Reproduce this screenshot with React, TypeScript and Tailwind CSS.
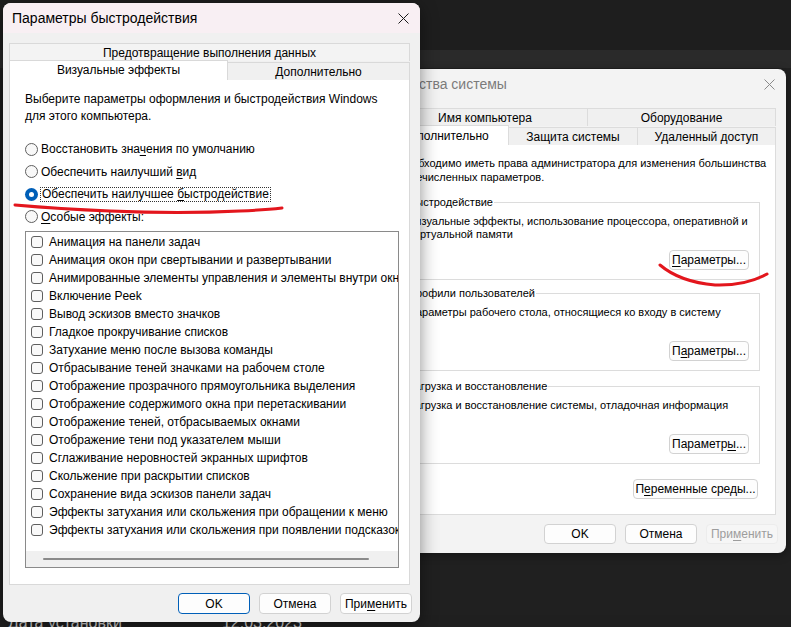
import React from "react";

const items = [
  "Анимация на панели задач",
  "Анимация окон при свертывании и развертывании",
  "Анимированные элементы управления и элементы внутри окна",
  "Включение Peek",
  "Вывод эскизов вместо значков",
  "Гладкое прокручивание списков",
  "Затухание меню после вызова команды",
  "Отбрасывание теней значками на рабочем столе",
  "Отображение прозрачного прямоугольника выделения",
  "Отображение содержимого окна при перетаскивании",
  "Отображение теней, отбрасываемых окнами",
  "Отображение тени под указателем мыши",
  "Сглаживание неровностей экранных шрифтов",
  "Скольжение при раскрытии списков",
  "Сохранение вида эскизов панели задач",
  "Эффекты затухания или скольжения при обращении к меню",
  "Эффекты затухания или скольжения при появлении подсказок",
];

function CloseX({ color }: { color: string }) {
  return (
    <svg width="11" height="11" viewBox="0 0 11 11">
      <path d="M0.5 0.5 L10.5 10.5 M10.5 0.5 L0.5 10.5" stroke={color} strokeWidth="1" fill="none" />
    </svg>
  );
}

function U({ children }: { children: React.ReactNode }) {
  return <span className="underline decoration-1 underline-offset-[2px]">{children}</span>;
}

function Radio({ checked }: { checked?: boolean }) {
  if (checked) {
    return (
      <span className="flex h-[13px] w-[13px] shrink-0 items-center justify-center rounded-full bg-[#005fb8]">
        <span className="h-[5px] w-[5px] rounded-full bg-white" />
      </span>
    );
  }
  return <span className="h-[13px] w-[13px] shrink-0 rounded-full border border-[#5f5f5f] bg-[#f8f8f8]" />;
}

function Btn({
  children,
  primary,
  disabled,
  className = "",
}: {
  children: React.ReactNode;
  primary?: boolean;
  disabled?: boolean;
  className?: string;
}) {
  const base = "flex items-center justify-center rounded-[4px] border text-[12px] ";
  const look = primary
    ? "border-[#005fb8] bg-[#fdfdfd] text-black"
    : disabled
    ? "border-[#ececec] bg-[#f6f6f6] text-[#9d9d9d]"
    : "border-[#d2d2d2] bg-[#fdfdfd] text-black";
  return <div className={base + look + " " + className}>{children}</div>;
}

function Group({
  label,
  lines,
  btn,
}: {
  label: string;
  lines: React.ReactNode;
  btn: React.ReactNode;
}) {
  return (
    <div className="relative flex h-[78px] flex-col border border-[#dcdcdc] pb-[9px] pl-[9px] pr-[10px] pt-[12px]">
      <span className="absolute left-[8px] top-[-8px] bg-white px-[1px] text-[11px] leading-[14px]">{label}</span>
      <div className="whitespace-nowrap text-[11px] leading-[13px]">{lines}</div>
      <Btn className="mt-auto h-[20px] w-[80px] self-end">{btn}</Btn>
    </div>
  );
}

export default function App() {
  return (
    <div className="relative isolate h-[627px] w-[791px] overflow-hidden bg-[#1f1f1f] font-['Liberation_Sans',Arial,sans-serif] text-black">
      {/* desktop background */}
      <div className="flex h-full flex-col">
        <div className="h-[50px] bg-[#1e1e1e]" />
        <div className="h-[18px] bg-[#2a2a2a]" />
        <div className="flex-1 bg-[#202020]" />
        <div className="flex h-[12px] items-start gap-[100px] pl-[8px] text-[16px] leading-[16px] text-[#d6d6d6]">
          <span>Дата установки</span>
          <span>12.03.2023</span>
        </div>
      </div>

      {/* System properties window (behind) */}
      <div className="absolute left-[374px] top-[69px] z-0 isolate flex h-[484px] w-[412px] flex-col overflow-hidden rounded-[8px] bg-[#f3f3f3] shadow-[0_2px_10px_rgba(0,0,0,0.4)]">
        <div className="flex h-[31px] shrink-0 items-center justify-between pl-[12px] pr-[11px]">
          <span className="text-[14px] text-[#7b7b7b]">Свойства системы</span>
          <CloseX color="#8a8a8a" />
        </div>
        <div className="ml-[8px] mr-[10px] mt-[8px] flex flex-col">
          <div className="flex h-[18px] text-[12px]">
            <div className="flex w-[206px] items-center justify-center border border-b-0 border-[#dcdcdc] bg-[#f0f0f0]">
              Имя компьютера
            </div>
            <div className="flex flex-1 items-center justify-center border border-b-0 border-l-0 border-[#dcdcdc] bg-[#f0f0f0]">
              Оборудование
            </div>
          </div>
          <div className="relative z-10 flex h-[19px] text-[12px]">
            <div className="-mt-[1px] flex h-[20px] w-[127px] items-center justify-center border border-b-0 border-[#dcdcdc] bg-white">
              Дополнительно
            </div>
            <div className="mt-[1px] flex h-[18px] w-[129px] items-center justify-center border border-b-0 border-l-0 border-[#dcdcdc] bg-[#f0f0f0]">
              Защита системы
            </div>
            <div className="mt-[1px] flex h-[18px] flex-1 items-center justify-center border border-b-0 border-l-0 border-[#dcdcdc] bg-[#f0f0f0]">
              Удаленный доступ
            </div>
          </div>
          <div className="-mt-[1px] flex h-[371px] flex-col border border-[#dcdcdc] bg-white pl-[15px] pr-[15px] pt-[11px]">
            <div className="whitespace-nowrap text-[11px] leading-[14px]">
              Необходимо иметь права администратора для изменения большинства
              <br />
              перечисленных параметров.
            </div>
            <div className="mt-[18px]">
              <Group
                label="Быстродействие"
                lines={
                  <>
                    Визуальные эффекты, использование процессора, оперативной и
                    <br />
                    виртуальной памяти
                  </>
                }
                btn={
                  <>
                    <U>П</U>араметры...
                  </>
                }
              />
            </div>
            <div className="mt-[13px]">
              <Group
                label="Профили пользователей"
                lines="Параметры рабочего стола, относящиеся ко входу в систему"
                btn={
                  <>
                    П<U>а</U>раметры...
                  </>
                }
              />
            </div>
            <div className="mt-[15px]">
              <Group
                label="Загрузка и восстановление"
                lines="Загрузка и восстановление системы, отладочная информация"
                btn={
                  <>
                    Параметр<U>ы</U>...
                  </>
                }
              />
            </div>
            <Btn className="mr-[2px] mt-[15px] h-[20px] w-[125px] self-end">
              П<U>е</U>ременные среды...
            </Btn>
          </div>
        </div>
        <div className="mt-[9px] flex justify-end gap-[9px] pr-[8px]">
          <Btn className="h-[20px] w-[72px]">OK</Btn>
          <Btn className="h-[20px] w-[72px]">Отмена</Btn>
          <Btn disabled className="h-[20px] w-[72px]">
            При<U>м</U>енить
          </Btn>
        </div>
      </div>

      {/* Performance options window (front) */}
      <div className="absolute left-[3px] top-[3px] z-20 isolate flex h-[619px] w-[417px] flex-col overflow-hidden rounded-[8px] bg-[#f0f0f0] shadow-[0_4px_18px_rgba(0,0,0,0.45)]">
        <div className="flex h-[30px] shrink-0 items-center justify-between bg-[#f8eff3] pl-[9px] pr-[11px]">
          <span className="text-[14px]">Параметры быстродействия</span>
          <CloseX color="#1a1a1a" />
        </div>
        <div className="ml-[6px] mr-[10px] mt-[10px] flex flex-col">
          <div className="flex h-[18px] items-center justify-center border border-b-0 border-[#d9d9d9] bg-[#f3f3f3] text-[12px]">
            Предотвращение выполнения данных
          </div>
          <div className="relative z-10 flex h-[19px] text-[12px]">
            <div className="-mt-[1px] flex h-[20px] w-[219px] items-center justify-center border border-b-0 border-[#d9d9d9] bg-white pb-[2px]">
              Визуальные эффекты
            </div>
            <div className="mt-[1px] flex h-[18px] flex-1 items-center justify-center border border-b-0 border-l-0 border-[#d9d9d9] bg-[#f0f0f0]">
              Дополнительно
            </div>
          </div>
          <div className="-mt-[1px] flex h-[506px] flex-col border border-[#d9d9d9] bg-white pl-[15px] pr-[10px] pt-[11px]">
            <div className="text-[12px] leading-[17px]">
              Выберите параметры оформления и быстродействия Windows
              <br />
              для этого компьютера.
            </div>
            <div className="mt-[13px] flex flex-col text-[12px]">
              <div className="flex h-[22.5px] items-center gap-[3px]">
                <Radio />
                <span>
                  Восстановить зна<U>ч</U>ения по умолчанию
                </span>
              </div>
              <div className="flex h-[22.5px] items-center gap-[3px]">
                <Radio />
                <span>
                  Обеспечить наилучший <U>в</U>ид
                </span>
              </div>
              <div className="flex h-[22.5px] items-center gap-[2px]">
                <Radio checked />
                <span className="border border-dotted border-[#333] px-[1px] leading-[13px]">
                  Обеспечить наилучшее <U>б</U>ыстродействие
                </span>
              </div>
              <div className="flex h-[22.5px] items-center gap-[3px]">
                <Radio />
                <span>
                  <U>О</U>собые эффекты:
                </span>
              </div>
            </div>
            <div className="mt-[3px] flex h-[337px] w-[374px] flex-col border border-[#8a8a8a]">
              <div className="flex flex-col overflow-hidden pt-[1px]">
                {items.map((t) => (
                  <div key={t} className="flex h-[18px] shrink-0 items-center gap-[6px] whitespace-nowrap pl-[5px] text-[12px]">
                    <span className="h-[12px] w-[12px] shrink-0 rounded-[3px] border border-[#5f5f5f] bg-[#f9f9f9]" />
                    <span>{t}</span>
                  </div>
                ))}
              </div>
              <div className="mt-auto flex h-[16px] shrink-0 items-center bg-[#f0f0f0] pl-[17px]">
                <div className="h-[2px] w-[326px] rounded-full bg-[#8a8a8a]" />
              </div>
            </div>
          </div>
        </div>
        <div className="mt-[8px] flex justify-end gap-[9px] pr-[8px]">
          <Btn primary className="h-[21px] w-[72px]">OK</Btn>
          <Btn className="h-[21px] w-[72px]">Отмена</Btn>
          <Btn className="h-[21px] w-[72px]">
            При<U>м</U>енить
          </Btn>
        </div>
      </div>

      {/* red annotations */}
      <svg className="pointer-events-none absolute left-0 top-0 z-30" width="791" height="627" viewBox="0 0 791 627">
        <path
          d="M15 205 Q 60 209 110 211 Q 180 214 240 211 Q 265 210 282 208"
          stroke="#e3161d"
          strokeWidth="3"
          strokeLinecap="round"
          fill="none"
        />
        <path
          d="M660 265 Q 680 282 715 285 Q 745 286 767 274"
          stroke="#e3161d"
          strokeWidth="3"
          strokeLinecap="round"
          fill="none"
        />
      </svg>
    </div>
  );
}
